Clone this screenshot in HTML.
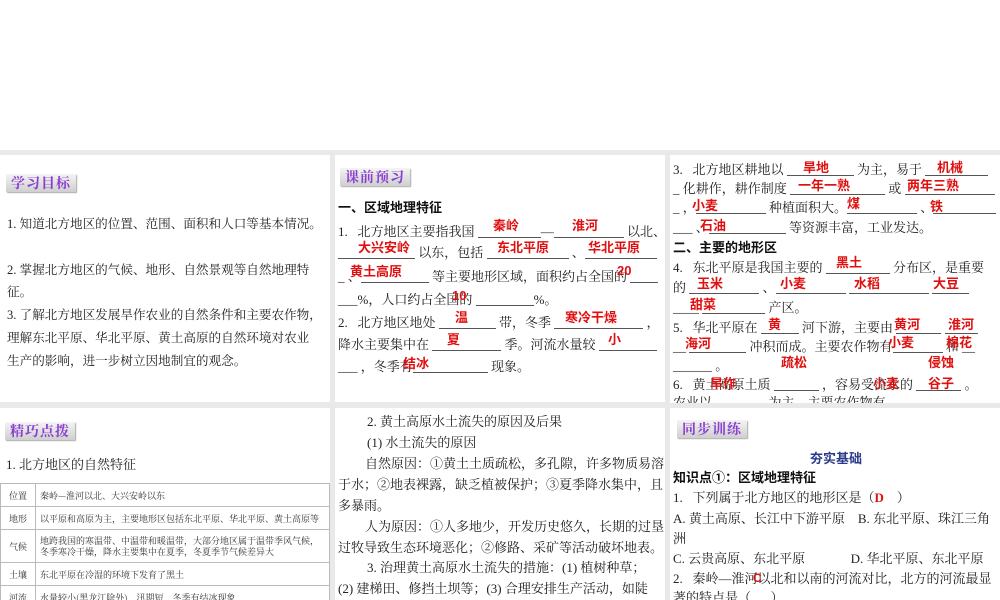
<!DOCTYPE html>
<html><head><meta charset="utf-8"><style>
body{margin:0;width:1000px;height:600px;background:#fff;position:relative;overflow:hidden}
.p{position:absolute;background:#fff;overflow:hidden}
.bg{position:absolute;left:0;top:150px;width:1000px;height:450px;background:#e9e9e9}
.t{position:absolute;white-space:nowrap;font-family:"Liberation Serif","Noto Serif CJK SC",serif;font-size:13px;line-height:16px;color:#222}
.b{font-family:"Liberation Sans","Noto Sans CJK SC",sans-serif;font-weight:bold;color:#111}
.r{position:absolute;white-space:nowrap;color:#e01010;font-family:"Liberation Sans","Noto Sans CJK SC",sans-serif;font-weight:bold;font-size:13px;line-height:16px}
.u{display:inline-block;border-bottom:1px solid #555;height:13px;vertical-align:top}
.badge{position:absolute;height:18px;background:linear-gradient(#f4f4f4,#cfcfcf);box-shadow:1px 1px 1px #aaa;color:#8a3fd0;font-family:"Noto Serif CJK SC",serif;font-weight:bold;font-size:14px;line-height:18px;padding:0 5px;letter-spacing:1px}
table{position:absolute;border-collapse:collapse;font-family:"Noto Serif CJK SC",serif;font-size:9px;color:#333}
td{border:1px solid #bbb;padding:0 4px;height:22px;line-height:11px}
td:first-child{width:26px;text-align:center}
.s{font-size:12.6px}
</style></head><body>
<div class="bg"></div>

<div class="p" style="left:0;top:155px;width:330px;height:247px"></div>
<div class="badge" style="left:6px;top:174px">学习目标</div>
<div class="t s" style="left:7px;top:216px">1. 知道北方地区的位置、范围、面积和人口等基本情况。</div>
<div class="t s" style="left:7px;top:262px">2. 掌握北方地区的气候、地形、自然景观等自然地理特</div>
<div class="t s" style="left:7px;top:284px">征。</div>
<div class="t s" style="left:7px;top:307px">3. 了解北方地区发展旱作农业的自然条件和主要农作物，</div>
<div class="t s" style="left:7px;top:330px">理解东北平原、华北平原、黄土高原的自然环境对农业</div>
<div class="t s" style="left:7px;top:353px">生产的影响，进一步树立因地制宜的观念。</div>

<div class="p" style="left:335px;top:155px;width:330px;height:247px"></div>
<div class="badge" style="left:340px;top:168px">课前预习</div>
<div class="t b" style="left:338px;top:200px">一、区域地理特征</div>
<div class="t" style="left:338px;top:224px">1.&nbsp;&nbsp; 北方地区主要指我国 <span class="u" style="width:63px"></span>—<span class="u" style="width:70px"></span> 以北、</div>
<div class="r" style="left:493px;top:218px">秦岭</div><div class="r" style="left:572px;top:218px">淮河</div>
<div class="t" style="left:338px;top:245px"><span class="u" style="width:77px"></span> 以东，包括 <span class="u" style="width:82px"></span> 、<span class="u" style="width:72px"></span></div>
<div class="r" style="left:358px;top:240px">大兴安岭</div><div class="r" style="left:497px;top:240px">东北平原</div><div class="r" style="left:588px;top:240px">华北平原</div>
<div class="t" style="left:338px;top:269px">_ 、<span class="u" style="width:68px"></span> 等主要地形区域，面积约占全国的 <span class="u" style="width:28px"></span></div>
<div class="r" style="left:350px;top:264px">黄土高原</div><div class="r" style="left:617px;top:263px">20</div>
<div class="t" style="left:338px;top:292px">___%，人口约占全国的 <span class="u" style="width:58px"></span>%。</div>
<div class="r" style="left:452px;top:288px">10</div>
<div class="t" style="left:338px;top:315px">2.&nbsp;&nbsp; 北方地区地处 <span class="u" style="width:57px"></span> 带，冬季 <span class="u" style="width:89px"></span> ，</div>
<div class="r" style="left:455px;top:310px">温</div><div class="r" style="left:565px;top:310px">寒冷干燥</div>
<div class="t" style="left:338px;top:337px">降水主要集中在 <span class="u" style="width:69px"></span> 季。河流水量较 <span class="u" style="width:58px"></span></div>
<div class="r" style="left:447px;top:332px">夏</div><div class="r" style="left:608px;top:332px">小</div>
<div class="t" style="left:338px;top:359px">___ ，冬季有<span class="u" style="width:75px"></span> 现象。</div>
<div class="r" style="left:403px;top:356px">结冰</div>

<div class="p" style="left:670px;top:155px;width:330px;height:248px">
<div class="t" style="left:3px;top:7px">3.&nbsp;&nbsp; 北方地区耕地以 <span class="u" style="width:67px"></span> 为主，易于 <span class="u" style="width:63px"></span></div>
<div class="r" style="left:133px;top:5px">旱地</div><div class="r" style="left:267px;top:5px">机械</div>
<div class="t" style="left:3px;top:26px">_ 化耕作，耕作制度 <span class="u" style="width:95px"></span> 或 <span class="u" style="width:90px"></span></div>
<div class="r" style="left:128px;top:23px">一年一熟</div><div class="r" style="left:237px;top:23px">两年三熟</div>
<div class="t" style="left:3px;top:45px">_ ，<span class="u" style="width:70px"></span> 种植面积大。<span class="u" style="width:70px"></span> 、<span class="u" style="width:63px"></span></div>
<div class="r" style="left:22px;top:43px">小麦</div><div class="r" style="left:177px;top:41px">煤</div><div class="r" style="left:260px;top:44px">铁</div>
<div class="t" style="left:3px;top:65px">___ 、<span class="u" style="width:77px"></span> 等资源丰富，工业发达。</div>
<div class="r" style="left:30px;top:63px">石油</div>
<div class="t b" style="left:3px;top:85px">二、主要的地形区</div>
<div class="t" style="left:3px;top:105px">4.&nbsp;&nbsp; 东北平原是我国主要的 <span class="u" style="width:64px"></span> 分布区，是重要</div>
<div class="r" style="left:166px;top:100px">黑土</div>
<div class="t" style="left:3px;top:125px">的 <span class="u" style="width:70px"></span> 、<span class="u" style="width:70px"></span> <span class="u" style="width:80px"></span> <span class="u" style="width:37px"></span></div>
<div class="r" style="left:27px;top:121px">玉米</div><div class="r" style="left:110px;top:121px">小麦</div><div class="r" style="left:184px;top:121px">水稻</div><div class="r" style="left:263px;top:121px">大豆</div>
<div class="t" style="left:3px;top:145px">____ <span class="u" style="width:63px"></span> 产区。</div>
<div class="r" style="left:20px;top:142px">甜菜</div>
<div class="t" style="left:3px;top:165px">5.&nbsp;&nbsp; 华北平原在 <span class="u" style="width:38px"></span> 河下游，主要由 <span class="u" style="width:45px"></span> <span class="u" style="width:33px"></span></div>
<div class="r" style="left:98px;top:162px">黄</div><div class="r" style="left:224px;top:162px">黄河</div><div class="r" style="left:278px;top:162px">淮河</div>
<div class="t" style="left:3px;top:184px">__ <span class="u" style="width:57px"></span> 冲积而成。主要农作物有<span class="u" style="width:50px"></span> 和 __</div>
<div class="r" style="left:15px;top:181px">海河</div><div class="r" style="left:218px;top:180px">小麦</div><div class="r" style="left:276px;top:180px">棉花</div>
<div class="t" style="left:3px;top:203px">______ 。</div>
<div class="r" style="left:111px;top:200px">疏松</div><div class="r" style="left:258px;top:200px">侵蚀</div>
<div class="t" style="left:3px;top:222px">6.&nbsp;&nbsp; 黄土高原土质 <span class="u" style="width:45px"></span> ，容易受流水的 <span class="u" style="width:45px"></span> 。</div>
<div class="r" style="left:40px;top:221px">旱作</div><div class="r" style="left:203px;top:221px">小麦</div><div class="r" style="left:258px;top:221px">谷子</div>
<div class="t" style="left:3px;top:240px">农业以 <span class="u" style="width:50px"></span> 为主，主要农作物有</div>
</div>

<div class="p" style="left:0;top:408px;width:330px;height:192px">
<div class="badge" style="left:5px;top:14px">精巧点拨</div>
<div class="t" style="left:6px;top:49px;font-size:13px">1. 北方地区的自然特征</div>
<table style="left:0;top:75px;width:330px">
<tr><td>位置</td><td>秦岭—淮河以北、大兴安岭以东</td></tr>
<tr><td>地形</td><td>以平原和高原为主，主要地形区包括东北平原、华北平原、黄土高原等</td></tr>
<tr><td style="height:32px">气候</td><td>地跨我国的寒温带、中温带和暖温带，大部分地区属于温带季风气候，<br>冬季寒冷干燥，降水主要集中在夏季，冬夏季节气候差异大</td></tr>
<tr><td>土壤</td><td>东北平原在冷湿的环境下发育了黑土</td></tr>
<tr><td>河流</td><td>水量较小(黑龙江除外)，汛期短，冬季有结冰现象</td></tr>
</table>
</div>

<div class="p" style="left:335px;top:408px;width:330px;height:192px">
<div class="t" style="left:32px;top:6px">2. 黄土高原水土流失的原因及后果</div>
<div class="t" style="left:32px;top:27px">(1) 水土流失的原因</div>
<div class="t" style="left:30px;top:48px">自然原因：①黄土土质疏松，多孔隙，许多物质易溶</div>
<div class="t" style="left:3px;top:69px">于水；②地表裸露，缺乏植被保护；③夏季降水集中，且</div>
<div class="t" style="left:3px;top:90px">多暴雨。</div>
<div class="t" style="left:30px;top:111px">人为原因：①人多地少，开发历史悠久，长期的过垦</div>
<div class="t" style="left:3px;top:132px">过牧导致生态环境恶化；②修路、采矿等活动破坏地表。</div>
<div class="t" style="left:32px;top:152px">3. 治理黄土高原水土流失的措施：(1) 植树种草；</div>
<div class="t" style="left:3px;top:173px">(2) 建梯田、修挡土坝等；(3) 合理安排生产活动，如陡</div>
</div>

<div class="p" style="left:670px;top:408px;width:330px;height:192px">
<div class="badge" style="left:7px;top:12px">同步训练</div>
<div class="t b" style="left:140px;top:43px;color:#2a3a8a">夯实基础</div>
<div class="t b" style="left:3px;top:62px">知识点①：区域地理特征</div>
<div class="t" style="left:3px;top:82px">1.&nbsp;&nbsp; 下列属于北方地区的地形区是（<span style="color:#e01010;font-weight:bold">D</span>&nbsp;&nbsp;&nbsp;&nbsp;）</div>
<div class="t" style="left:3px;top:103px">A. 黄土高原、长江中下游平原&nbsp;&nbsp;&nbsp; B. 东北平原、珠江三角</div>
<div class="t" style="left:3px;top:123px">洲</div>
<div class="t" style="left:3px;top:143px">C. 云贵高原、东北平原&nbsp;&nbsp;&nbsp;&nbsp;&nbsp;&nbsp;&nbsp;&nbsp;&nbsp;&nbsp;&nbsp;&nbsp;&nbsp; D. 华北平原、东北平原</div>
<div class="t" style="left:3px;top:163px">2.&nbsp;&nbsp; 秦岭—淮河以北和以南的河流对比，北方的河流最显</div>
<div class="r" style="left:83px;top:162px;font-size:12px">C</div>
<div class="t" style="left:3px;top:182px">著的特点是（&nbsp;&nbsp;&nbsp;&nbsp;&nbsp;&nbsp;）</div>
</div>
</body></html>
